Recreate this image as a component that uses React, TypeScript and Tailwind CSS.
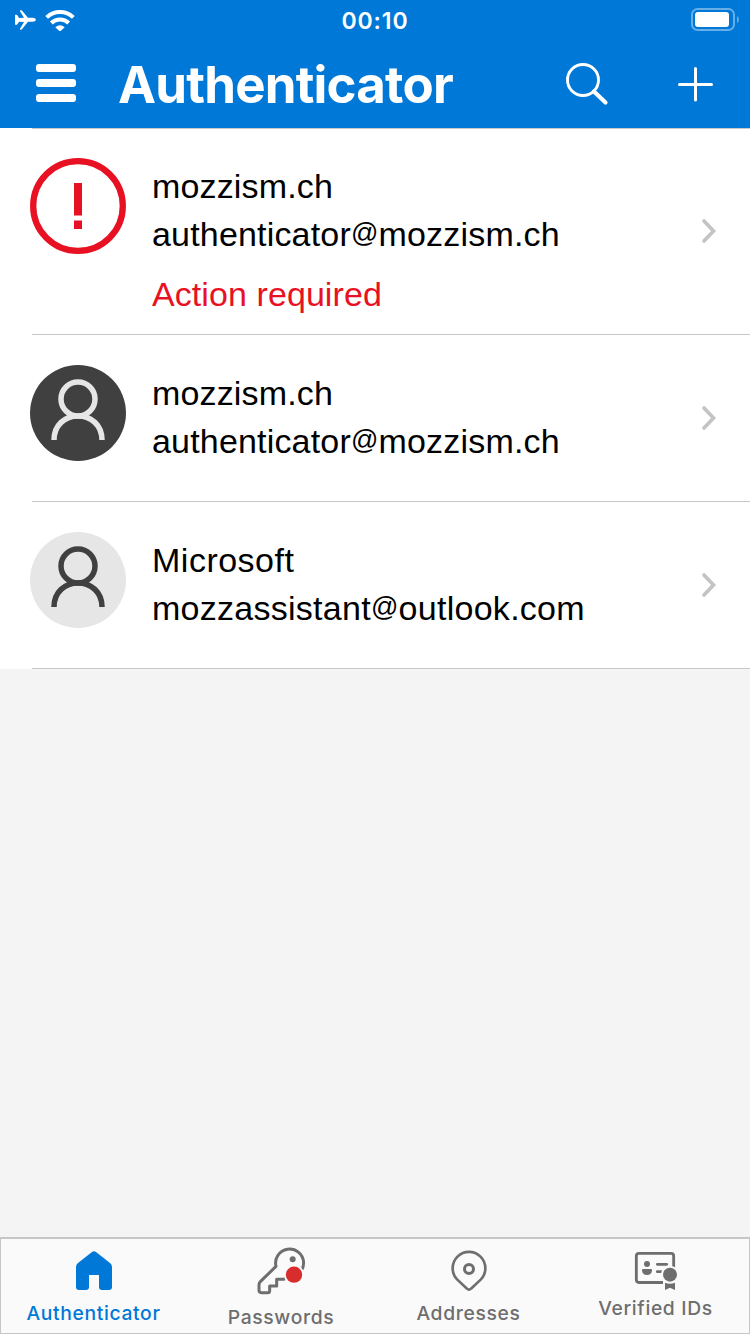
import type { ReactNode } from "react";

function AirplaneIcon() {
  return (
    <svg className="h-[20px] w-[22px]" viewBox="0 0 66 60" fill="#fff">
      <path d="M3 16 Q3 14.500 5 14.500 H7 Q9 14.500 10 16 L15.500 24 L30 23 L18 4 Q17 1 19.500 1 H21.500 Q23.500 1 25 3 L42 23.500 H56 Q65.500 24.500 65.500 29.500 Q65.500 34.500 56 35.500 H42 L25 56.500 Q23.500 59 21.500 59 H19.500 Q17 59 18 56 L30 36 L15.500 35 L10 43 Q9 44.500 7 44.500 H5 Q3 44.500 3 43 Z" />
    </svg>
  );
}

function WifiIcon() {
  return (
    <svg className="h-[22px] w-[30px]" viewBox="136 26 90 66">
      <g fill="none" stroke="#fff" strokeWidth="12">
        <path d="M141 51 A58 58 0 0 1 221 51" />
        <path d="M155 68 A38 38 0 0 1 207 68" />
      </g>
      <path d="M167 81 Q181 69 195 81 L183 92 Q181 93.500 179 92 Z" fill="#fff" />
    </svg>
  );
}

function BatteryIcon() {
  return (
    <svg className="h-[24px] w-[50px]" viewBox="0 0 50 24" fill="none">
      <rect x="2" y="1" width="42" height="21" rx="5.500" stroke="#66aee7" strokeWidth="2" />
      <rect x="5" y="4" width="34" height="15" rx="3" fill="#fff" />
      <path d="M47 8 Q49 9 49 11.500 Q49 14 47 15 Z" fill="#66aee7" />
    </svg>
  );
}

function SearchIcon() {
  return (
    <svg className="h-[44px] w-[44px]" viewBox="0 0 44 44" fill="none" stroke="#fff" strokeLinecap="round">
      <circle cx="18" cy="18" r="15.500" strokeWidth="2.900" />
      <path d="M29 29.500 L40.500 40.500" strokeWidth="4.200" />
    </svg>
  );
}

function PlusIcon() {
  return (
    <svg className="h-[36px] w-[36px]" viewBox="0 0 36 36" fill="none" stroke="#fff" strokeWidth="3" strokeLinecap="round">
      <path d="M17.500 2.500 V34 M1.500 18.500 H33.500" />
    </svg>
  );
}

function AlertAvatar() {
  return (
    <svg className="size-24 shrink-0" viewBox="0 0 96 96">
      <circle cx="48" cy="48" r="44.800" fill="none" stroke="#e81123" strokeWidth="6.300" />
      <path d="M44 25 h8 v32.500 h-8 Z M44 62.500 h8 v8.500 h-8 Z" fill="#e81123" />
    </svg>
  );
}

function PersonAvatar({ dark }: { dark: boolean }) {
  return (
    <svg className="size-24 shrink-0" viewBox="0 0 96 96">
      <circle cx="48" cy="48" r="48" fill={dark ? "#404040" : "#e6e6e6"} />
      <g fill="none" stroke={dark ? "#e6e6e6" : "#404040"} strokeWidth="5.500">
        <circle cx="48" cy="34" r="17" />
        <path d="M24 75 C24 60 35 51 48 51 C61 51 72 60 72 75" />
      </g>
    </svg>
  );
}

function Chevron() {
  return (
    <svg className="h-[26px] w-[18px] shrink-0" viewBox="0 0 18 26" fill="none" stroke="#c4c4c6" strokeWidth="3.700" strokeLinecap="round" strokeLinejoin="miter">
      <path d="M4 3 L13.500 13 L4 23" />
    </svg>
  );
}

function HomeIcon() {
  return (
    <svg className="h-[40px] w-[36px]" viewBox="0 0 36 40" fill="#0078d7">
      <path d="M16 1 Q18 -0.700 20 1 L34 12 Q36 13.500 36 16 V36 Q36 39 33 39 H26 Q23 39 23 36 V24 H13 V36 Q13 39 10 39 H3 Q0 39 0 36 V16 Q0 13.500 2 12 Z" />
    </svg>
  );
}

function KeyIcon() {
  return (
    <svg className="mr-px h-[50px] w-[50px]" viewBox="168 48 150 150">
      <path
        d="M228 109 A42 42 0 1 1 268 141 L250 148 H230 V168 H209 V182 Q209 188 203 188 H184 Q177 188 177 181 V164 Q177 159 181 155 Z"
        fill="none"
        stroke="#6e6e6e"
        strokeWidth="9"
        strokeLinejoin="round"
      />
      <circle cx="278" cy="88" r="9" fill="#6e6e6e" />
      <circle cx="282" cy="134" r="30" fill="#fafafa" />
      <circle cx="282" cy="134" r="24.500" fill="#d92c2c" />
    </svg>
  );
}

function PinIcon() {
  return (
    <svg className="h-[42px] w-[38px]" viewBox="150 60 114 126" fill="none" stroke="#6e6e6e" strokeWidth="8">
      <path d="M201 176 L172 149 A49 49 0 1 1 242 149 L213 176 Q207 182 201 176 Z" />
      <circle cx="207" cy="117" r="13.500" strokeWidth="9" />
    </svg>
  );
}

function CredentialIcon() {
  return (
    <svg className="h-[40px] w-[44px]" viewBox="222 63 132 120">
      <rect x="229" y="70" width="112" height="87.500" rx="8" fill="none" stroke="#6e6e6e" strokeWidth="8.500" />
      <g fill="#6e6e6e">
        <circle cx="261" cy="102" r="9" />
        <path d="M249 117 H273 Q276 117 276 120 C276 130 270 135 261 135 C252 135 246 130 246 120 Q246 117 249 117 Z" />
      </g>
      <path d="M292 103 H320 M292 125 H303" stroke="#6e6e6e" strokeWidth="8.500" strokeLinecap="round" />
      <circle cx="330" cy="134" r="27" fill="#fafafa" />
      <path d="M309 150 H351 V182 H309 Z" fill="#fafafa" />
      <circle cx="330" cy="134" r="21" fill="#6e6e6e" />
      <path d="M315 158 Q330 164 345 158 V180 L330 173 L315 180 Z" fill="#6e6e6e" />
    </svg>
  );
}

type AccountProps = {
  avatar: ReactNode;
  name: string;
  user: string;
  domain: string;
  nameClass: string;
  emailClass: string;
  warning?: string;
};

function AccountRow({ avatar, name, user, domain, nameClass, emailClass, warning }: AccountProps) {
  return (
    <li>
      <div className={warning ? "flex h-[205px] pt-[29px] pl-[30px]" : "flex h-[166px] pt-[30px] pl-[30px]"}>
        {avatar}
        <div className="flex-1 pt-1 pl-[26px] text-[34px] leading-[48px] whitespace-nowrap text-black">
          <p className={nameClass}>{name}</p>
          <p className={emailClass}>
            {user}
            <span className="align-[4px] text-[27px] leading-none">@</span>
            {domain}
          </p>
          {warning && <p className="mt-3 tracking-[0.08px] text-[#e81123]">{warning}</p>}
        </div>
        <div className={warning ? "-mt-[31px] flex items-center pr-8" : "-mt-[30px] flex items-center pr-8"}>
          <Chevron />
        </div>
      </div>
      <div className="ml-8 h-px bg-[#c8c7cc]" />
    </li>
  );
}

function Tab({ icon, label, className }: { icon: ReactNode; label: string; className: string }) {
  return (
    <button className={`flex flex-col items-center text-[19.300px] leading-6 font-medium tracking-[0.650px] ${className}`}>
      {icon}
      <span className="whitespace-nowrap">{label}</span>
    </button>
  );
}

export default function App() {
  return (
    <div className="flex h-[1334px] w-[750px] flex-col overflow-hidden bg-[#f4f4f4] font-['Liberation_Sans',sans-serif]">
      <header className="h-[128px] shrink-0 bg-[#0078d7] font-['Inter',sans-serif] text-white">
        <div className="grid h-10 grid-cols-3 items-center pr-[10px] pl-[14px]">
          <div className="flex items-center gap-[9px]">
            <AirplaneIcon />
            <WifiIcon />
          </div>
          <span className="pt-px pr-1 text-center text-[23px] leading-8 font-semibold tracking-[0.9px]">00:10</span>
          <div className="flex justify-end">
            <BatteryIcon />
          </div>
        </div>
        <div className="flex h-[88px] items-center pl-9">
          <div className="-mt-[3px] flex w-10 flex-col gap-[7px]">
            <i className="h-2 rounded-[3px] bg-white" />
            <i className="h-2 rounded-[3px] bg-white" />
            <i className="h-2 rounded-[3px] bg-white" />
          </div>
          <h1 className="w-[446px] pl-[42px] text-[51px] leading-none font-bold tracking-[-0.8px]">Authenticator</h1>
          <div className="flex flex-1 justify-between pr-9 pl-[43px]">
            <SearchIcon />
            <div className="pt-1">
              <PlusIcon />
            </div>
          </div>
        </div>
      </header>

      <main className="flex-1">
        <ul className="bg-white">
          <li className="ml-8 h-px bg-[#c8c7cc]" />
          <AccountRow
            avatar={<AlertAvatar />}
            name="mozzism.ch"
            nameClass="tracking-[0.15px]"
            user="authenticator"
            domain="mozzism.ch"
            emailClass="tracking-[0.18px]"
            warning="Action required"
          />
          <AccountRow
            avatar={<PersonAvatar dark />}
            name="mozzism.ch"
            nameClass="tracking-[0.15px]"
            user="authenticator"
            domain="mozzism.ch"
            emailClass="tracking-[0.18px]"
          />
          <AccountRow
            avatar={<PersonAvatar dark={false} />}
            name="Microsoft"
            nameClass="tracking-[0.5px]"
            user="mozzassistant"
            domain="outlook.com"
            emailClass="tracking-[0.27px]"
          />
        </ul>
      </main>

      <nav className="grid h-[97px] shrink-0 grid-cols-4 border border-t-2 border-[#c6c6c6] bg-[#fafafa] font-['Inter',sans-serif] text-[#6e6e6e]">
        <Tab icon={<HomeIcon />} label="Authenticator" className="gap-[10px] pt-3 pr-[2px] text-[#0078d7]" />
        <Tab icon={<KeyIcon />} label="Passwords" className="gap-[9px] pt-[7px] pr-px" />
        <Tab icon={<PinIcon />} label="Addresses" className="gap-[9px] pt-[11px]" />
        <Tab icon={<CredentialIcon />} label="Verified IDs" className="gap-[5px] pt-3" />
      </nav>
    </div>
  );
}
